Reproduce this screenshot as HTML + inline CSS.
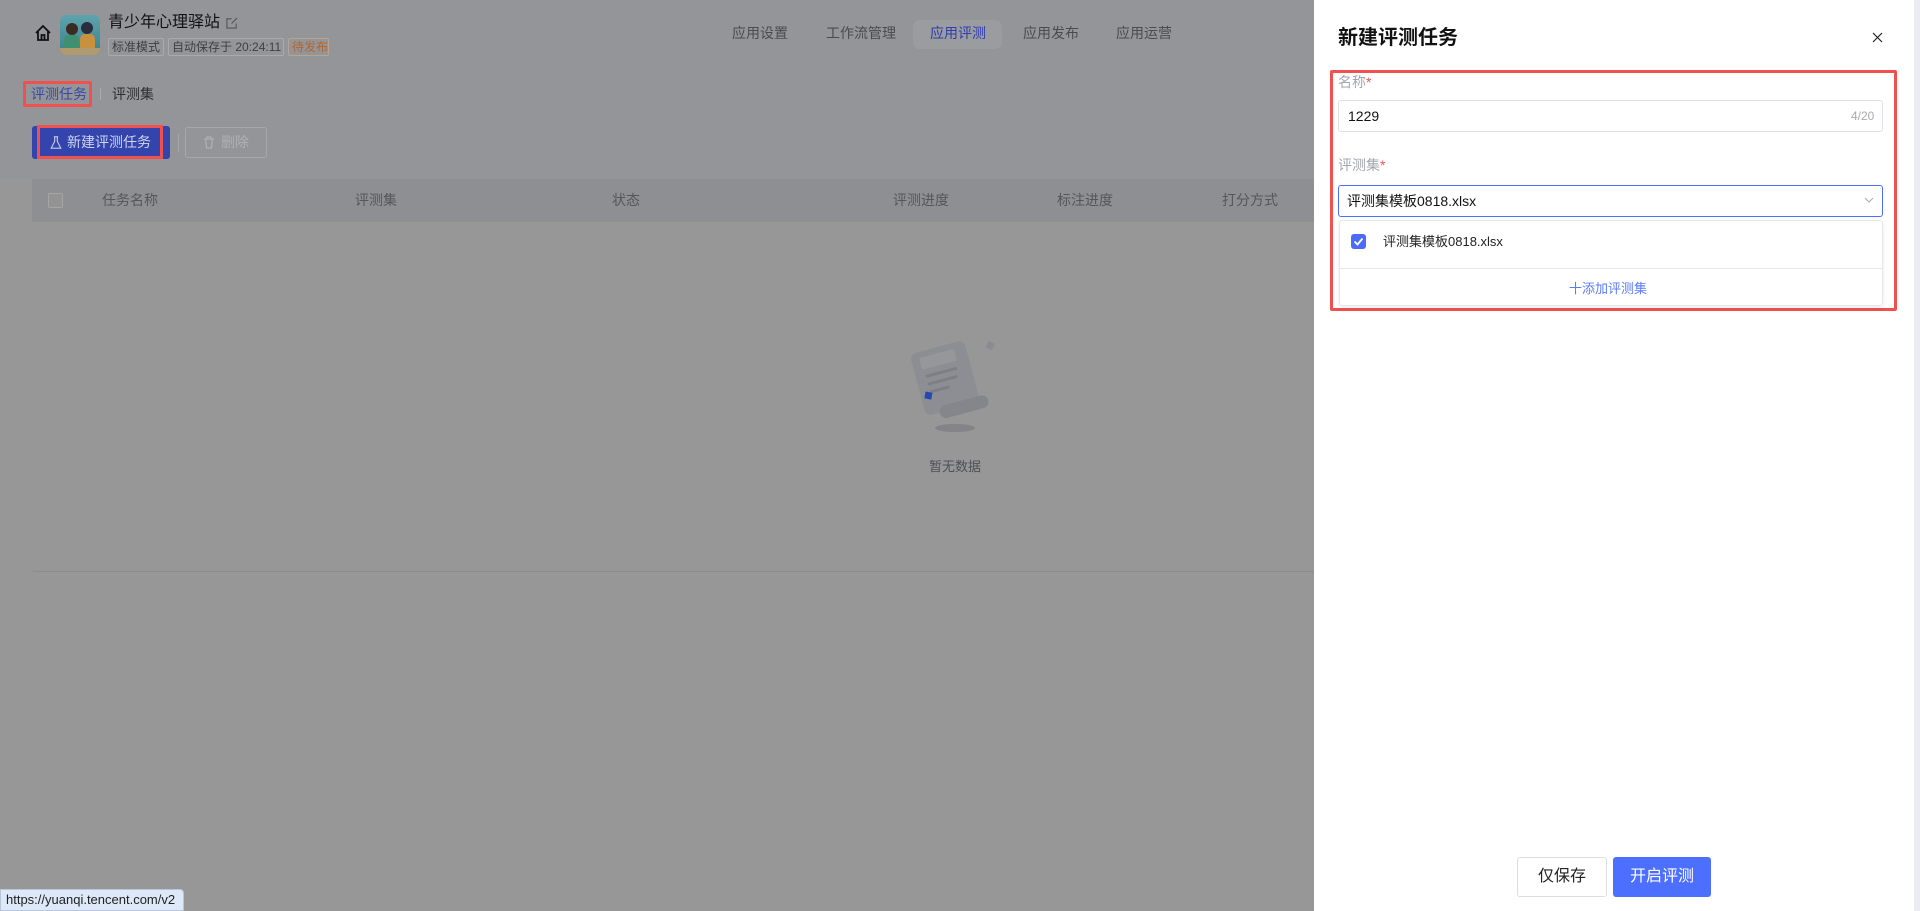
<!DOCTYPE html>
<html><head><meta charset="utf-8"><style>
*{box-sizing:border-box;margin:0;padding:0}
body{width:1920px;height:911px;overflow:hidden;font-family:"Liberation Sans","Noto Sans CJK SC",sans-serif;background:#979797;position:relative}
.a{position:absolute;white-space:nowrap}
.t{color:#4a4b50;font-size:14px;line-height:20px}
.tag{position:absolute;top:38px;height:18px;border:1px solid #aaa;border-radius:2px;font-size:12px;line-height:16px;padding:0 3px;color:#3e3f44;white-space:nowrap}
.th{position:absolute;top:190px;font-size:14px;line-height:20px;color:#55565b}
</style></head><body>
<div class="a" style="left:0;top:0;width:1314px;height:179px;background:#949599"></div>
<!-- header -->
<svg class="a" style="left:34px;top:24px" width="18" height="18" viewBox="0 0 18 18"><path d="M2 9L9 2l7 7M4 7.5V16h10V7.5M7.5 16v-5h3v5" fill="none" stroke="#111" stroke-width="1.8"/></svg>
<div class="a" style="left:60px;top:15px;width:40px;height:40px;border-radius:6px;background:linear-gradient(#5fa3ad,#3b7f8b);overflow:hidden">
<div class="a" style="left:6px;top:8px;width:12px;height:12px;border-radius:50%;background:#3a2a22"></div>
<div class="a" style="left:21px;top:7px;width:12px;height:12px;border-radius:50%;background:#2a2d3e"></div>
<div class="a" style="left:4px;top:20px;width:15px;height:14px;background:#3f8f72;border-radius:5px 5px 0 0"></div>
<div class="a" style="left:20px;top:19px;width:15px;height:15px;background:#c9913f;border-radius:5px 5px 0 0"></div>
<div class="a" style="left:0;top:33px;width:40px;height:7px;background:#b09a70"></div></div>
<div class="a" style="left:108px;top:12px;font-size:16px;line-height:22px;color:#111">青少年心理驿站</div>
<svg class="a" style="left:226px;top:17px" width="12" height="12" viewBox="0 0 13 13"><path d="M11 7v5H1V2h5M6 7l6-6" fill="none" stroke="#555" stroke-width="1.2"/></svg>
<div class="tag" style="left:108px;width:56px">标准模式</div>
<div class="tag" style="left:168px;width:116px">自动保存于 20:24:11</div>
<div class="tag" style="left:288px;width:41px;color:#b5652a;border-color:#b7a493">待发布</div>
<!-- nav tabs -->
<div class="a" style="left:913px;top:20px;width:89px;height:29px;border-radius:7px;background:#9b9ca0"></div>
<div class="a t" style="left:732px;top:23px">应用设置</div>
<div class="a t" style="left:826px;top:23px">工作流管理</div>
<div class="a t" style="left:930px;top:23px;color:#2f3cad">应用评测</div>
<div class="a t" style="left:1023px;top:23px">应用发布</div>
<div class="a t" style="left:1116px;top:23px">应用运营</div>
<!-- subtabs -->
<div class="a" style="left:23px;top:81px;width:69px;height:26px;border:3px solid #f0504e;border-radius:2px"></div>
<div class="a" style="left:31px;top:84px;font-size:14px;line-height:20px;color:#3a47a8">评测任务</div>
<div class="a" style="left:100px;top:88px;width:1px;height:12px;background:#aaa"></div>
<div class="a" style="left:112px;top:84px;font-size:14px;line-height:20px;color:#2c2d32">评测集</div>
<!-- buttons -->
<div class="a" style="left:32px;top:126px;width:138px;height:33px;background:#3344ad;border-radius:3px"></div>
<div class="a" style="left:37px;top:125px;width:126px;height:34px;border:3px solid #f0504e"></div>
<svg class="a" style="left:50px;top:136px" width="12" height="13" viewBox="0 0 13 15"><path d="M4 1h5M5 1v5L1 14h11L8 6V1" fill="none" stroke="#c7cde8" stroke-width="1.3"/></svg>
<div class="a" style="left:67px;top:132px;font-size:14px;line-height:20px;color:#d0d5ee">新建评测任务</div>
<div class="a" style="left:178px;top:134px;width:1px;height:18px;background:#a6a6a6"></div>
<div class="a" style="left:185px;top:127px;width:82px;height:31px;border:1px solid #a8a8a8;border-radius:3px"></div>
<svg class="a" style="left:203px;top:136px" width="12" height="13" viewBox="0 0 12 13"><path d="M1 3h10M4 3V1h4v2M2.5 3l1 9h5l1-9" fill="none" stroke="#b0b0b0" stroke-width="1.2"/></svg>
<div class="a" style="left:221px;top:132px;font-size:14px;line-height:20px;color:#b0b0b0">删除</div>
<!-- table header -->
<div class="a" style="left:32px;top:179px;width:1282px;height:43px;background:#8e8f93"></div>
<div class="a" style="left:48px;top:193px;width:15px;height:15px;border:1px solid #a5a5a5;border-radius:2px;background:#939393"></div>
<div class="th" style="left:102px">任务名称</div>
<div class="th" style="left:355px">评测集</div>
<div class="th" style="left:612px">状态</div>
<div class="th" style="left:893px">评测进度</div>
<div class="th" style="left:1057px">标注进度</div>
<div class="th" style="left:1222px">打分方式</div>
<div class="a" style="left:33px;top:571px;width:1281px;height:1px;background:#8c8c8c"></div>
<!-- empty -->
<svg class="a" style="left:903px;top:332px" width="100" height="104" viewBox="0 0 100 104">
<g transform="rotate(-15 50 45)"><rect x="14" y="12" width="56" height="64" rx="6" fill="#8d8e93"/><rect x="22" y="18" width="36" height="12" rx="2" fill="#96979b"/><rect x="24" y="36" width="32" height="3" fill="#7e7f84"/><rect x="24" y="44" width="30" height="3" fill="#7e7f84"/><rect x="24" y="52" width="20" height="3" fill="#7e7f84"/><rect x="28" y="70" width="50" height="13" rx="6.5" fill="#85868b"/></g>
<rect x="22" y="60" width="7" height="7" fill="#2747b0" transform="rotate(10 25 63)"/>
<rect x="84" y="10" width="7" height="7" fill="#8b8c90" transform="rotate(30 87 13)"/>
<ellipse cx="52" cy="96" rx="20" ry="4" fill="#848488"/></svg>
<div class="a" style="left:929px;top:458px;font-size:13px;line-height:18px;color:#4f5055">暂无数据</div>
<!-- status bar -->
<div class="a" style="left:0;top:889px;width:184px;height:22px;background:#dde8f8;border:1px solid #b9c5d8;border-radius:0 4px 0 0;font-size:13px;line-height:20px;padding-left:5px;color:#222">https://yuanqi.tencent.com/v2</div>
<!-- drawer -->
<div class="a" style="left:1314px;top:0;width:606px;height:911px;background:#fff"></div>
<div class="a" style="left:1914px;top:0;width:6px;height:911px;background:#ebedf2"></div>
<div class="a" style="left:1338px;top:24px;font-size:20px;line-height:28px;font-weight:bold;color:#111">新建评测任务</div>
<svg class="a" style="left:1872px;top:32px" width="11" height="11" viewBox="0 0 11 11"><path d="M1 1l9 9M10 1l-9 9" stroke="#222" stroke-width="1.2"/></svg>
<div class="a" style="left:1330px;top:70px;width:567px;height:241px;border:3px solid #f0504e;border-radius:2px"></div>
<div class="a" style="left:1338px;top:73px;font-size:14px;line-height:18px;color:#a3a6ae">名称<span style="color:#f05050">*</span></div>
<div class="a" style="left:1338px;top:100px;width:545px;height:32px;border:1px solid #dfe1e6;border-radius:3px"></div>
<div class="a" style="left:1348px;top:107px;font-size:14px;line-height:18px;color:#111">1229</div>
<div class="a" style="left:1851px;top:108px;font-size:12px;line-height:16px;color:#aaa">4/20</div>
<div class="a" style="left:1338px;top:156px;font-size:14px;line-height:18px;color:#a3a6ae">评测集<span style="color:#f05050">*</span></div>
<div class="a" style="left:1338px;top:185px;width:545px;height:32px;border:1px solid #4d6fff;border-radius:3px"></div>
<div class="a" style="left:1347px;top:192px;font-size:14px;line-height:18px;color:#111">评测集模板0818.xlsx</div>
<svg class="a" style="left:1864px;top:197px" width="10" height="7" viewBox="0 0 10 7"><path d="M1 1l4 4 4-4" fill="none" stroke="#aaa" stroke-width="1"/></svg>
<div class="a" style="left:1339px;top:220px;width:544px;height:86px;border:1px solid #e6e7eb;border-radius:3px;box-shadow:0 2px 6px rgba(0,0,0,.08)"></div>
<div class="a" style="left:1351px;top:234px;width:15px;height:15px;background:#4b6bfb;border-radius:3px"></div>
<svg class="a" style="left:1351px;top:234px" width="15" height="15" viewBox="0 0 15 15"><path d="M3.5 7.5l3 3 5-6" fill="none" stroke="#fff" stroke-width="1.8"/></svg>
<div class="a" style="left:1383px;top:233px;font-size:13px;line-height:17px;color:#222">评测集模板0818.xlsx</div>
<div class="a" style="left:1340px;top:268px;width:542px;height:1px;background:#e6e7eb"></div>
<div class="a" style="left:1569px;top:280px;font-size:13px;line-height:17px;color:#5a7cf7">十添加评测集</div>
<div class="a" style="left:1517px;top:857px;width:90px;height:40px;border:1px solid #dcdee3;border-radius:3px;font-size:16px;line-height:38px;text-align:center;color:#222">仅保存</div>
<div class="a" style="left:1613px;top:857px;width:98px;height:40px;background:#4d6fff;border-radius:3px;font-size:16px;line-height:40px;text-align:center;color:#fff">开启评测</div>
</body></html>
